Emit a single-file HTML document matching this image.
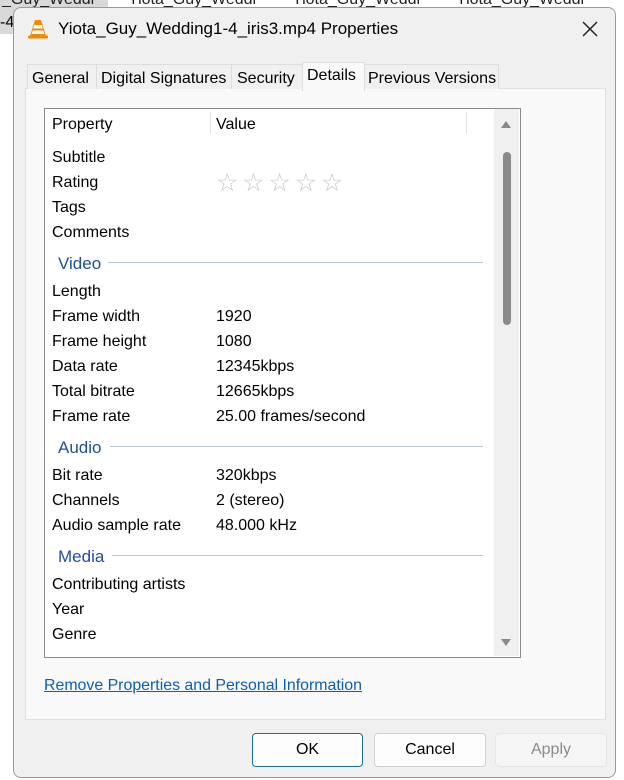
<!DOCTYPE html>
<html><head><style>
body{margin:0;width:624px;height:780px;background:#fff;position:relative;overflow:hidden;font-family:"Liberation Sans",sans-serif;}
.a{position:absolute;white-space:nowrap;}
.t{font-size:16px;color:#000;line-height:24px;margin-top:2px;}
.s{font-size:17px;color:#1f4e9e;line-height:24px;margin-top:2px;}
.ln{position:absolute;height:1px;background:#b8c4d8;}
</style></head><body>
<div class="a" style="left:0;top:-8px;width:108px;height:22px;background:#d9d9d9"></div>
<div class="a" style="left:2px;top:-9px;font-size:16px;color:#222">_Guy_Weddi</div>
<div class="a" style="left:128px;top:-9px;font-size:16px;color:#222">Yiota_Guy_Weddi</div>
<div class="a" style="left:292px;top:-9px;font-size:16px;color:#222">Yiota_Guy_Weddi</div>
<div class="a" style="left:456px;top:-9px;font-size:16px;color:#222">Yiota_Guy_Weddi</div>
<div class="a" style="left:0;top:12px;width:14px;height:22px;background:#d9d9d9;font-size:16px;line-height:22px">-4</div>
<div class="a" style="left:13px;top:7px;width:601px;height:769px;background:#f0f0f0;border:1px solid #9a9a9a;border-radius:8px;"></div>
<svg class="a" style="left:26px;top:17px" width="24" height="24" viewBox="0 0 24 24"><path d="M9 3h6l5 16H4z" fill="#f08a00"/><path d="M8.2 8h7.6l1 3.5H7.2zM6.6 13.5h10.8l1 3.5H5.6z" fill="#fff"/><rect x="2" y="18.5" width="20" height="3" rx="1" fill="#f08a00"/></svg>
<div class="a" style="left:58px;top:19px;font-size:17px;color:#000">Yiota_Guy_Wedding1-4_iris3.mp4 Properties</div>
<svg class="a" style="left:582px;top:21px" width="16" height="16"><path d="M1 1L15 15M15 1L1 15" stroke="#222" stroke-width="1.5"/></svg>
<div class="a" style="left:25px;top:88px;width:579px;height:630px;background:#f9f9f9;border:1px solid #e0e0e0"></div>
<div class="a" style="left:27px;top:64px;width:68px;height:24px;background:#f0f0f0;border:1px solid #ddd;border-bottom:none"></div>
<div class="a" style="left:96px;top:64px;width:134px;height:24px;background:#f0f0f0;border:1px solid #ddd;border-bottom:none"></div>
<div class="a" style="left:231px;top:64px;width:70px;height:24px;background:#f0f0f0;border:1px solid #ddd;border-bottom:none"></div>
<div class="a" style="left:302px;top:62px;width:61px;height:28px;background:#f9f9f9;border:1px solid #ddd;border-bottom:none"></div>
<div class="a" style="left:364px;top:64px;width:133px;height:24px;background:#f0f0f0;border:1px solid #ddd;border-bottom:none"></div>
<div class="a t" style="left:32px;top:65px">General</div>
<div class="a t" style="left:101px;top:65px">Digital Signatures</div>
<div class="a t" style="left:237px;top:65px">Security</div>
<div class="a t" style="left:307px;top:62px">Details</div>
<div class="a t" style="left:368px;top:65px">Previous Versions</div>
<div class="a" style="left:44px;top:108px;width:475px;height:548px;background:#fff;border:1px solid #8a8a8a"></div>
<div class="a" style="left:210px;top:112px;width:1px;height:22px;background:#e5e5e5"></div>
<div class="a" style="left:466px;top:112px;width:1px;height:22px;background:#e5e5e5"></div>
<div class="a" style="left:494px;top:109px;width:25px;height:547px;background:#f0f0f0"></div>
<svg class="a" style="left:500px;top:119px" width="12" height="10"><path d="M1 9L6 2L11 9z" fill="#8a8a8a"/></svg>
<div class="a" style="left:503px;top:152px;width:8px;height:173px;background:#8a8a8a;border-radius:4px"></div>
<svg class="a" style="left:500px;top:638px" width="12" height="10"><path d="M1 1L6 8L11 1z" fill="#8a8a8a"/></svg>
<div class="a t" style="left:52px;top:111px">Property</div>
<div class="a t" style="left:216px;top:111px">Value</div>
<div class="a t" style="left:52px;top:144px">Subtitle</div>
<div class="a t" style="left:52px;top:169px">Rating</div>
<div class="a" style="left:216px;top:169px;font-size:25px;color:#c8c8c8;letter-spacing:3.8px;line-height:28px">☆☆☆☆☆</div>
<div class="a t" style="left:52px;top:194px">Tags</div>
<div class="a t" style="left:52px;top:219px">Comments</div>
<div class="a s" style="left:58px;top:250px">Video</div><div class="ln" style="left:108px;top:262px;width:375px"></div>
<div class="a t" style="left:52px;top:278px">Length</div>
<div class="a t" style="left:52px;top:303px">Frame width</div><div class="a t" style="left:216px;top:303px">1920</div>
<div class="a t" style="left:52px;top:328px">Frame height</div><div class="a t" style="left:216px;top:328px">1080</div>
<div class="a t" style="left:52px;top:353px">Data rate</div><div class="a t" style="left:216px;top:353px">12345kbps</div>
<div class="a t" style="left:52px;top:378px">Total bitrate</div><div class="a t" style="left:216px;top:378px">12665kbps</div>
<div class="a t" style="left:52px;top:403px">Frame rate</div><div class="a t" style="left:216px;top:403px">25.00 frames/second</div>
<div class="a s" style="left:58px;top:434px">Audio</div><div class="ln" style="left:110px;top:446px;width:373px"></div>
<div class="a t" style="left:52px;top:462px">Bit rate</div><div class="a t" style="left:216px;top:462px">320kbps</div>
<div class="a t" style="left:52px;top:487px">Channels</div><div class="a t" style="left:216px;top:487px">2 (stereo)</div>
<div class="a t" style="left:52px;top:512px">Audio sample rate</div><div class="a t" style="left:216px;top:512px">48.000 kHz</div>
<div class="a s" style="left:58px;top:543px">Media</div><div class="ln" style="left:112px;top:555px;width:371px"></div>
<div class="a t" style="left:52px;top:571px">Contributing artists</div>
<div class="a t" style="left:52px;top:596px">Year</div>
<div class="a t" style="left:52px;top:621px">Genre</div>
<div class="a" style="left:44px;top:677px;font-size:15.9px;color:#0a5fb4;text-decoration:underline">Remove Properties and Personal Information</div>
<div class="a" style="left:252px;top:733px;width:109px;height:32px;background:#fdfdfd;border:1px solid #1a6ea8;border-radius:4px;text-align:center;line-height:32px;font-size:16px">OK</div>
<div class="a" style="left:374px;top:733px;width:110px;height:32px;background:#fdfdfd;border:1px solid #d0d0d0;border-radius:4px;text-align:center;line-height:32px;font-size:16px">Cancel</div>
<div class="a" style="left:495px;top:733px;width:110px;height:32px;background:#f5f5f5;border:1px solid #e5e5e5;border-radius:4px;text-align:center;line-height:32px;font-size:16px;color:#8a8a8a">Apply</div>
</body></html>
